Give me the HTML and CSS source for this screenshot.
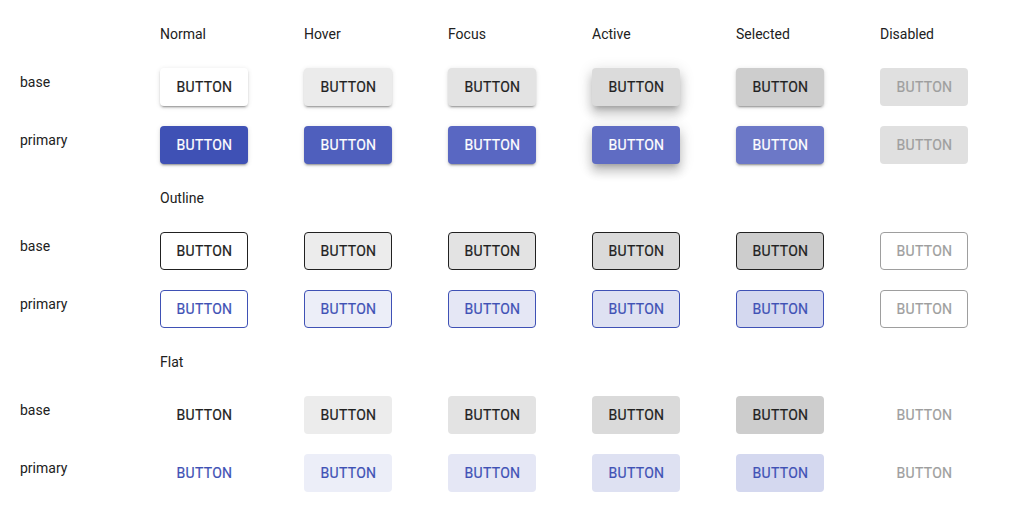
FILE: index.html
```html
<!DOCTYPE html>
<html>
<head>
<meta charset="utf-8">
<link rel="stylesheet" href="styles.css">
</head>
<body>
<div class="page">
  <section class="section">
    <div class="row head">
      <div></div>
      <div class="title">Normal</div>
      <div class="title">Hover</div>
      <div class="title">Focus</div>
      <div class="title">Active</div>
      <div class="title">Selected</div>
      <div class="title">Disabled</div>
    </div>
    <div class="row">
      <div class="label">base</div>
      <div><button class="btn raised base normal">Button</button></div>
      <div><button class="btn raised base hover">Button</button></div>
      <div><button class="btn raised base focus">Button</button></div>
      <div><button class="btn raised base active">Button</button></div>
      <div><button class="btn raised base selected">Button</button></div>
      <div><button class="btn raised base disabled">Button</button></div>
    </div>
    <div class="row">
      <div class="label">primary</div>
      <div><button class="btn raised primary normal">Button</button></div>
      <div><button class="btn raised primary hover">Button</button></div>
      <div><button class="btn raised primary focus">Button</button></div>
      <div><button class="btn raised primary active">Button</button></div>
      <div><button class="btn raised primary selected">Button</button></div>
      <div><button class="btn raised primary disabled">Button</button></div>
    </div>
  </section>
  <section class="section">
    <div class="row head">
      <div></div>
      <div class="title">Outline</div>
    </div>
    <div class="row">
      <div class="label">base</div>
      <div><button class="btn outline base normal">Button</button></div>
      <div><button class="btn outline base hover">Button</button></div>
      <div><button class="btn outline base focus">Button</button></div>
      <div><button class="btn outline base active">Button</button></div>
      <div><button class="btn outline base selected">Button</button></div>
      <div><button class="btn outline base disabled">Button</button></div>
    </div>
    <div class="row">
      <div class="label">primary</div>
      <div><button class="btn outline primary normal">Button</button></div>
      <div><button class="btn outline primary hover">Button</button></div>
      <div><button class="btn outline primary focus">Button</button></div>
      <div><button class="btn outline primary active">Button</button></div>
      <div><button class="btn outline primary selected">Button</button></div>
      <div><button class="btn outline primary disabled">Button</button></div>
    </div>
  </section>
  <section class="section">
    <div class="row head">
      <div></div>
      <div class="title">Flat</div>
    </div>
    <div class="row">
      <div class="label">base</div>
      <div><button class="btn flat base normal">Button</button></div>
      <div><button class="btn flat base hover">Button</button></div>
      <div><button class="btn flat base focus">Button</button></div>
      <div><button class="btn flat base active">Button</button></div>
      <div><button class="btn flat base selected">Button</button></div>
      <div><button class="btn flat base disabled">Button</button></div>
    </div>
    <div class="row">
      <div class="label">primary</div>
      <div><button class="btn flat primary normal">Button</button></div>
      <div><button class="btn flat primary hover">Button</button></div>
      <div><button class="btn flat primary focus">Button</button></div>
      <div><button class="btn flat primary active">Button</button></div>
      <div><button class="btn flat primary selected">Button</button></div>
      <div><button class="btn flat primary disabled">Button</button></div>
    </div>
  </section>
</div>
</body>
</html>
```
FILE: styles.css
```css
html, body {
  margin: 0;
  background: #ffffff;
}
body {
  font-family: Roboto, "Liberation Sans", sans-serif;
  font-size: 14px;
  line-height: 20px;
  color: #212121;
}
.page {
  padding: 24px 0 0 20px;
  display: flex;
  flex-direction: column;
  gap: 24px;
}
.section {
  display: flex;
  flex-direction: column;
  gap: 20px;
}
.row {
  display: grid;
  grid-template-columns: 140px repeat(6, 144px);
  align-items: start;
}
.row.head {
  margin-bottom: 4px;
}
.title {
  line-height: 20px;
}
.label {
  padding-top: 4px;
}
.btn {
  box-sizing: border-box;
  width: 88px;
  height: 38px;
  margin: 0;
  padding: 0 0 0 1px;
  border: 1px solid transparent;
  border-radius: 4px;
  font-family: Roboto, "Liberation Sans", sans-serif;
  font-size: 14px;
  font-weight: 400;
  text-transform: uppercase;
  letter-spacing: 0.3px;
  -webkit-text-stroke: 0.2px currentColor;
  display: block;
  cursor: pointer;
}

/* raised */
.raised {
  box-shadow: 0 3px 1px -2px rgba(0,0,0,.2), 0 2px 2px 0 rgba(0,0,0,.14), 0 1px 5px 0 rgba(0,0,0,.12);
}
.raised.active {
  box-shadow: 0 5px 5px -3px rgba(0,0,0,.2), 0 8px 10px 1px rgba(0,0,0,.14), 0 3px 14px 2px rgba(0,0,0,.12);
}
.raised.base { color: #212121; }
.raised.base.normal { background: #ffffff; }
.raised.base.hover { background: #ebebeb; }
.raised.base.focus { background: #e3e3e3; }
.raised.base.active { background: #dbdbdb; }
.raised.base.selected { background: #cdcdcd; }
.raised.primary { color: #ffffff; }
.raised.primary.normal { background: #3f51b5; }
.raised.primary.hover { background: #4f5fbd; }
.raised.primary.focus { background: #5967c2; }
.raised.primary.active { background: #5f6cc3; }
.raised.primary.selected { background: #6c78c7; }
.raised.disabled {
  background: #e0e0e0;
  color: #9e9e9e;
  box-shadow: none;
}

/* outline */
.outline { background: transparent; }
.outline.base { border-color: #212121; color: #212121; }
.outline.primary { border-color: #3f51b5; color: #3f51b5; }
.outline.base.hover, .flat.base.hover { background: #ececec; }
.outline.base.focus, .flat.base.focus { background: #e3e3e3; }
.outline.base.active, .flat.base.active { background: #dadada; }
.outline.base.selected, .flat.base.selected { background: #cdcdcd; }
.outline.primary.hover, .flat.primary.hover { background: #eceef8; }
.outline.primary.focus, .flat.primary.focus { background: #e5e7f5; }
.outline.primary.active, .flat.primary.active { background: #dee1f2; }
.outline.primary.selected, .flat.primary.selected { background: #d4d8ef; }
.outline.disabled {
  border-color: #9e9e9e;
  color: #9e9e9e;
  background: transparent;
}

/* flat */
.flat { background: transparent; }
.flat.base { color: #212121; }
.flat.primary { color: #3f51b5; }
.flat.disabled { color: #9e9e9e; background: transparent; }
```
